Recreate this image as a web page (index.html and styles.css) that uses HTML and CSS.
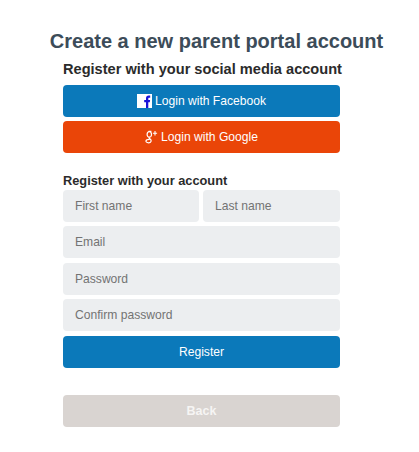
FILE: index.html
```html
<!DOCTYPE html>
<html lang="en">
<head>
<meta charset="utf-8">
<title>Create a new parent portal account</title>
<link rel="stylesheet" href="styles.css">
</head>
<body>
<main class="page">
  <h1 class="title">Create a new parent portal account</h1>
  <section class="panel">
    <h2 class="social-heading">Register with your social media account</h2>
    <div class="stack">
      <button class="btn btn-blue" type="button">
        <svg class="icon-fb" viewBox="0 0 15 14" width="15" height="14" aria-hidden="true"><rect width="15" height="14" fill="#fff"/><path d="M9 14V8.2H7.2V6H9V4.4C9 2.6 10 1.6 11.7 1.6H13.2V3.8H12.2C11.5 3.8 11.3 4.1 11.3 4.7V6H13.1L12.8 8.2H11.3V14Z" fill="#1a14d8"/></svg>
        <span>Login with Facebook</span>
      </button>
      <button class="btn btn-orange" type="button">
        <svg class="icon-g" viewBox="0 0 13 14" width="13" height="14" aria-hidden="true"><g fill="none" stroke="#fff" stroke-width="1.2"><ellipse cx="4.3" cy="4.4" rx="2.2" ry="2.8"/><path d="M6.4 1.4H3.6M4.6 7.2C3.4 7.8 4.2 8.4 5.4 9.3C6.8 10.4 6.2 12.8 3.6 12.8C1.6 12.8.8 11.8 1 10.8C1.2 9.8 2.6 9.3 4.4 9.3"/><path d="M10 1V5.4M7.9 3.2H12.1" stroke-width="1.1"/></g></svg>
        <span>Login with Google</span>
      </button>
    </div>
    <h3 class="account-heading">Register with your account</h3>
    <form class="stack">
      <div class="name-row">
        <input class="field" type="text" placeholder="First name">
        <input class="field" type="text" placeholder="Last name">
      </div>
      <input class="field" type="email" placeholder="Email">
      <input class="field" type="password" placeholder="Password">
      <input class="field" type="password" placeholder="Confirm password">
      <button class="btn btn-blue" type="button">Register</button>
    </form>
    <button class="btn btn-back" type="button">Back</button>
  </section>
</main>
</body>
</html>
```

FILE: styles.css
```css
* { box-sizing: border-box; }
html, body { margin: 0; background: #fff; }
body { font-family: "Liberation Sans", Arial, sans-serif; }
.page { width: 419px; height: 452px; padding-top: 29px; overflow: hidden; }
.title {
  margin: 0 0 8px;
  padding-left: 14px;
  font-size: 20px;
  line-height: 24px;
  font-weight: 700;
  color: #3c4c59;
  text-align: center;
}
.panel { width: 277px; margin-left: 63px; }
.social-heading {
  margin: 0 0 7px;
  font-size: 14.6px;
  line-height: 17px;
  font-weight: 700;
  color: #2b2b2b;
  white-space: nowrap;
}
.stack { display: flex; flex-direction: column; gap: 4.4px; }
.account-heading {
  margin: 19.6px 0 1px;
  font-size: 12.8px;
  line-height: 16px;
  font-weight: 700;
  color: #2b2b2b;
}
.btn {
  display: flex;
  align-items: center;
  justify-content: center;
  gap: 3px;
  width: 100%;
  height: 32px;
  border: 0;
  border-radius: 4px;
  font-family: inherit;
  font-size: 12.1px;
  color: #fff;
  padding: 0;
}
.btn-blue { background: #0b79ba; }
.btn-orange { background: #ea4508; }
.btn-back {
  margin-top: 27px;
  background: #d9d4d1;
  font-size: 12.5px;
  font-weight: 700;
  color: #f6f5f4;
}
.name-row { display: grid; grid-template-columns: 136px 137px; gap: 4px; }
.field {
  display: block;
  width: 100%;
  height: 32px;
  border: 0;
  border-radius: 4px;
  background: #eceef0;
  padding: 0 12px;
  font-family: inherit;
  font-size: 12.1px;
  color: #333;
}
.field::placeholder { color: #737373; opacity: 1; }
.icon-fb, .icon-g { flex: none; }
```
